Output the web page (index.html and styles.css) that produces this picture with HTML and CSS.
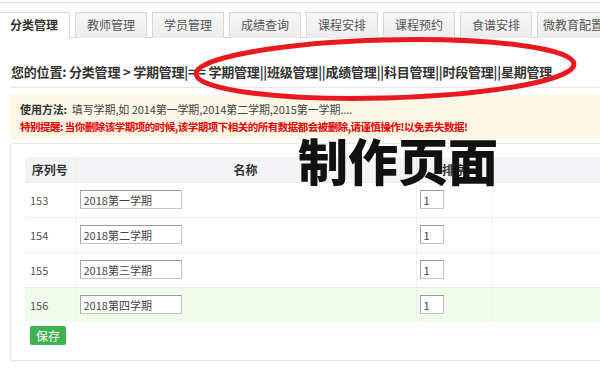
FILE: index.html
```html
<!DOCTYPE html>
<html lang="zh-CN">
<head>
    <meta charset="UTF-8">
    <title>分类管理 - 学期管理</title>
    <link rel="stylesheet" href="styles.css">
</head>
<body>
    <div class="top-bar">
        <ul class="tabs">
            <li class="active">分类管理</li>
            <li>教师管理</li>
            <li>学员管理</li>
            <li>成绩查询</li>
            <li>课程安排</li>
            <li>课程预约</li>
            <li>食谱安排</li>
            <li>微教育配置</li>
        </ul>
    </div>

    <div class="crumb">
        您的位置: 分类管理 &gt; 学期管理|= = 学期管理||班级管理||成绩管理||科目管理||时段管理||星期管理
    </div>

    <div class="notice">
        <p><b>使用方法:</b>&nbsp;&nbsp;填写学期,如 2014第一学期,2014第二学期,2015第一学期....</p>
        <p class="warn">特别提醒: 当你删除该学期项的时候,该学期项下相关的所有数据都会被删除,请谨慎操作!以免丢失数据!</p>
    </div>

    <div class="panel">
        <table class="grid">
            <thead>
                <tr>
                    <th class="col-id">序列号</th>
                    <th class="col-name">名称</th>
                    <th class="col-sort">排序</th>
                    <th></th>
                </tr>
            </thead>
            <tbody>
                <tr>
                    <td>153</td>
                    <td><input class="txt-name" type="text" value="2018第一学期"></td>
                    <td><input class="txt-sort" type="text" value="1"></td>
                    <td></td>
                </tr>
                <tr>
                    <td>154</td>
                    <td><input class="txt-name" type="text" value="2018第二学期"></td>
                    <td><input class="txt-sort" type="text" value="1"></td>
                    <td></td>
                </tr>
                <tr>
                    <td>155</td>
                    <td><input class="txt-name" type="text" value="2018第三学期"></td>
                    <td><input class="txt-sort" type="text" value="1"></td>
                    <td></td>
                </tr>
                <tr class="hover">
                    <td>156</td>
                    <td><input class="txt-name" type="text" value="2018第四学期"></td>
                    <td><input class="txt-sort" type="text" value="1"></td>
                    <td></td>
                </tr>
            </tbody>
        </table>
        <button class="btn-save" type="button">保存</button>
    </div>

    <!-- 标注 -->
    <svg class="mark" width="600" height="375" viewBox="0 0 600 375">
        <ellipse cx="385" cy="69" rx="189" ry="29" transform="rotate(-1.5 385 69)"
                 fill="none" stroke="#e8191f" stroke-width="5"/>
    </svg>
    <div class="stamp">制作页面</div>
</body>
</html>
```

FILE: styles.css
```css
* { margin: 0; padding: 0; box-sizing: border-box; }
html, body {
    width: 600px;
    height: 375px;
    overflow: hidden;
}
body {
    position: relative;
    font-family: "Noto Sans CJK SC", "Noto Sans", sans-serif;
    font-size: 11px;
    color: #333;
    background: #fff;
}
.top-bar {
    margin-top: 2px;
    border-top: 1px solid #e3e3e3;
    padding-top: 9px;
    border-bottom: 1px solid #d4d4d4;
    width: 700px;
}
.tabs {
    list-style: none;
    display: flex;
    gap: 5px;
    margin-left: -2px;
    height: 25px;
}
.tabs li {
    width: 72px;
    flex: none;
    height: 26px;
    line-height: 24px;
    text-align: center;
    font-size: 12px;
    color: #555;
    background: linear-gradient(#f7f7f7, #ececec);
    border: 1px solid #d8d8d8;
    border-bottom: none;
    white-space: nowrap;
    overflow: hidden;
}
.tabs li.active {
    background: #fff;
    color: #333;
    font-weight: bold;
    position: relative;
    z-index: 1;
}
.crumb {
    margin-left: 10px;
    padding: 25px 0 6px 1px;
    line-height: 18px;
    font-size: 13px;
    font-weight: bold;
    letter-spacing: -0.2px;
    color: #333;
    white-space: nowrap;
    border-bottom: 1px solid #e8e8e8;
}
.notice {
    margin: 7px 0 0 10px;
    padding: 6px 10px 5px;
    background: #fcf7e6;
    line-height: 17px;
    color: #444;
    letter-spacing: -0.1px;
    white-space: nowrap;
}
.notice b {
    color: #333;
}
.notice .warn {
    color: #e60000;
    font-size: 10.5px;
    font-weight: bold;
    letter-spacing: -0.5px;
}
.panel {
    margin: 3px 0 0 10px;
    width: 700px;
    padding: 13px 0 15px 14px;
    border: 1px solid #e6e6e6;
    border-right: none;
}
.grid {
    border-collapse: collapse;
    width: 660px;
    table-layout: fixed;
}
.grid th {
    height: 25px;
    background: #f4f4f6;
    font-size: 12px;
    font-weight: bold;
    color: #333;
    border-left: 1px solid #ececec;
}
.grid th:first-child,
.grid td:first-child {
    border-left: none;
}
.grid .col-id { width: 50px; }
.grid .col-name { width: 341px; }
.grid .col-sort { width: 76px; }
.grid td {
    height: 35px;
    padding: 0 4px;
    border-top: 1px solid #ececec;
    border-left: 1px solid #f0f0f0;
    color: #555;
}
.grid td:first-child {
    padding-left: 5px;
}
.grid td:nth-child(3) {
    padding-left: 3px;
}
.grid tr.hover td {
    background: #f1fbea;
}
.grid input {
    height: 19px;
    font-family: inherit;
    font-size: 11px;
    color: #444;
    padding: 0 3px;
    border: 1px solid #c4c4c4;
    border-top-color: #999;
    border-left-color: #a8a8a8;
    background: #fff;
}
.txt-name { width: 102px; }
.txt-sort { width: 24px; }
.btn-save {
    display: block;
    margin: 4px 0 0 5px;
    width: 36px;
    height: 19px;
    border: none;
    border-radius: 2px;
    background: #3fb34f;
    color: #fff;
    font-family: inherit;
    font-size: 12px;
    cursor: pointer;
}
.mark {
    position: absolute;
    left: 0;
    top: 0;
    pointer-events: none;
}
.stamp {
    position: absolute;
    left: 298px;
    top: 134px;
    font-size: 50px;
    line-height: 50px;
    font-weight: 900;
    color: #111;
    white-space: nowrap;
}
```
